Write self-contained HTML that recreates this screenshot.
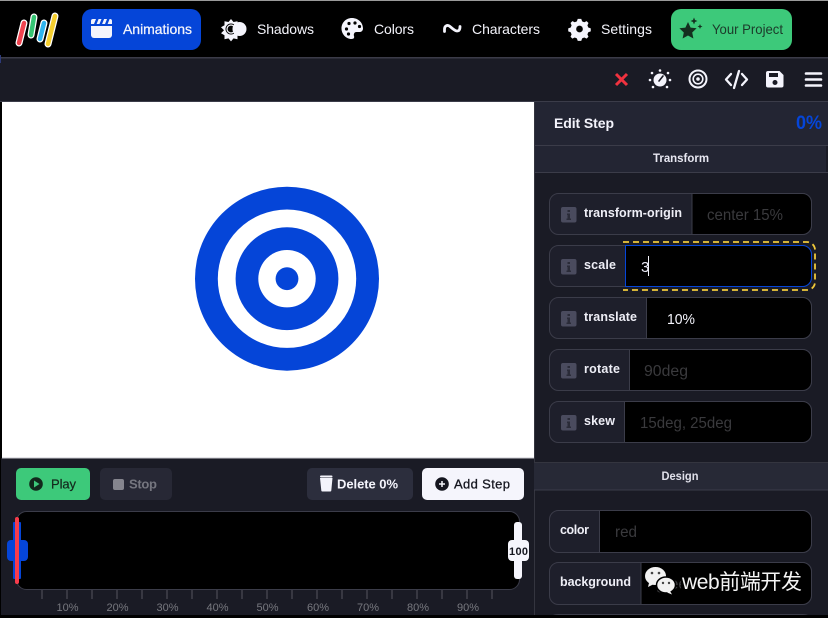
<!DOCTYPE html>
<html><head><meta charset="utf-8"><title>Animations</title>
<style>
html,body{margin:0;padding:0;background:#000;width:828px;height:618px;overflow:hidden}
svg{display:block;filter:blur(0.3px)}
text{font-family:"Liberation Sans","Noto Sans CJK SC",sans-serif}
.nav{font-size:14px;fill:#f4f4fb}
.med{stroke-width:.25px}
.lab{font-size:12.5px;font-weight:bold;fill:#eeeef6}
.ph{font-size:15.500px;fill:#3a3a3d}
.tk{font-size:11px;fill:#77787f;text-anchor:middle}
</style></head><body>
<svg width="828" height="618" viewBox="0 0 828 618" xmlns="http://www.w3.org/2000/svg">
<rect width="828" height="618" fill="#000"/>
<rect width="828" height="1" fill="#9a9a9a"/>
<!-- logo -->
<g stroke-linecap="round" fill="none">
<path d="M24 23L19 43M34 17L31 35M44 23L40 39M55 16L48 44" stroke="#fff" stroke-width="7"/>
<path d="M24 23L19 43" stroke="#f0434f" stroke-width="4.500"/>
<path d="M34 17L31 35" stroke="#35c573" stroke-width="4.500"/>
<path d="M44 23L40 39" stroke="#2fb4ee" stroke-width="4.500"/>
<path d="M55 16L48 44" stroke="#f6cf2f" stroke-width="4.500"/>
</g>
<!-- nav -->
<rect x="82" y="9" width="119" height="41" rx="10" fill="#0545d8"/>
<path d="M91 26h21v9a3 3 0 0 1-3 3H94a3 3 0 0 1-3-3z" fill="#f4f4fc"/>
<path d="M93 19h17a2 2 0 0 1 2 2v3H91v-3a2 2 0 0 1 2-2z" fill="#f4f4fc"/>
<path d="M96 19l-2 5h2.600l2-5zM101.500 19l-2 5h2.600l2-5zM107 19l-2 5h2.600l2-5z" fill="#0545d8"/>
<text class="nav med" x="123" y="34" textLength="69" stroke="#f4f4fb">Animations</text>

<path d="M231 19l2.500 3 4-.8 0 4 3 2-3 3 3 3-3 2 0 4-4-.8-2.500 3-2.500-3-4 .8 0-4-3.500-2 3-3-3-3 3.500-2 0-4 4 .8z" fill="#f4f4fc"/>
<circle cx="231" cy="29" r="5.500" fill="#000"/>
<circle cx="231" cy="29" r="4" fill="none" stroke="#f4f4fc" stroke-width="1.200"/>
<circle cx="239.500" cy="29" r="7" fill="#f4f4fc"/>
<text class="nav" x="257" y="34" textLength="57">Shadows</text>

<path d="M352 18c-6.500 0-10.500 5-10.500 10.500s4.500 10.500 10 10.500c2.500 0 3-1.500 2.500-3s0-4 2.500-4h3.500c1.500 0 3-1.500 3-3.500 0-6-5-10.500-11-10.500z" fill="#f4f4fc"/>
<circle cx="346.500" cy="29" r="1.600" fill="#000"/><circle cx="348.500" cy="34" r="1.600" fill="#000"/><circle cx="349" cy="23.500" r="1.600" fill="#000"/><circle cx="355" cy="23" r="1.600" fill="#000"/><circle cx="359.500" cy="26.500" r="1.600" fill="#000"/>
<text class="nav" x="374" y="34" textLength="40">Colors</text>

<path d="M444.500 31.500v-2c0-4 3-5 5.500-3 2.500 2.200 5 4.500 7 4.500 2 0 3-1 3-4.500" fill="none" stroke="#f4f4fc" stroke-width="2.800" stroke-linecap="round"/>
<text class="nav" x="472" y="34" textLength="68">Characters</text>

<g transform="translate(579.500 29) scale(.88) translate(-579 -29.500)">
<path d="M577 18h4l1 2.800 2.400 1 2.700-1.200 2.100 2.100-1.200 2.700 1 2.400 2.800 1v3.400l-2.800 1-1 2.400 1.200 2.700-2.100 2.100-2.700-1.200-2.400 1-1 2.800h-4l-1-2.800-2.400-1-2.700 1.200-2.100-2.100 1.200-2.700-1-2.400-2.800-1v-3.400l2.800-1 1-2.400-1.200-2.700 2.100-2.100 2.700 1.200 2.400-1z" fill="#f4f4fc"/>
<circle cx="579" cy="29.500" r="3.800" fill="#000"/>
</g>
<text class="nav" x="601" y="34" textLength="51">Settings</text>

<rect x="671" y="9" width="121" height="41" rx="10" fill="#3dc97a"/>
<path d="M688 22l2.600 5.600 6 .7-4.400 4.200 1.200 6-5.400-3-5.400 3 1.200-6-4.400-4.200 6-.7z" fill="#14301f"/>
<path d="M694 17.500l1 2.500 2.500 1-2.500 1-1 2.500-1-2.500-2.500-1 2.500-1zM700 24l.7 1.800 1.800.7-1.800.7-.7 1.800-.7-1.800-1.800-.7 1.800-.7z" fill="#14301f"/>
<text x="712" y="34" font-size="14" textLength="71" fill="#1c3a2a" lengthAdjust="spacingAndGlyphs">Your Project</text>

<!-- toolbar -->
<rect x="0" y="57" width="828" height="1.500" fill="#3b3b48"/>
<rect x="0" y="58.500" width="828" height="42.500" fill="#1a1b25"/>
<rect x="0" y="101" width="828" height="1" fill="#3b3c49"/>
<path d="M616 74l11 11M627 74l-11 11" stroke="#f0323f" stroke-width="3" fill="none"/>
<circle cx="660" cy="80" r="6.500" fill="#f4f4fc"/>
<path d="M659 81l4-5" stroke="#1a1b25" stroke-width="1.600" stroke-linecap="round"/>
<g fill="#f4f4fc"><circle cx="660" cy="70.500" r="1.300"/><circle cx="652" cy="73" r="1.300"/><circle cx="668" cy="73" r="1.300"/><circle cx="650" cy="80" r="1.300"/><circle cx="670" cy="80" r="1.300"/><circle cx="653" cy="87" r="1.300"/><circle cx="667" cy="87" r="1.300"/></g>
<circle cx="698" cy="79" r="8.500" fill="none" stroke="#f4f4fc" stroke-width="2"/>
<circle cx="698" cy="79" r="4.800" fill="none" stroke="#f4f4fc" stroke-width="1.600"/>
<circle cx="698" cy="79" r="1.800" fill="#f4f4fc"/>
<path d="M731 74l-5 5.500 5 5.500M742 74l5 5.500-5 5.500M739 71l-5 17" fill="none" stroke="#f4f4fc" stroke-width="2.300" stroke-linecap="round" stroke-linejoin="round"/>
<path d="M768 71h11.500l4 4v10.500a2 2 0 0 1-2 2H768a2 2 0 0 1-2-2V73a2 2 0 0 1 2-2z" fill="#f4f4fc"/>
<rect x="769" y="73" width="9" height="4" fill="#1a1b25"/>
<circle cx="775" cy="82.500" r="2.500" fill="#1a1b25"/>
<path d="M806 73.500h15M806 79.500h15M806 85.500h15" stroke="#f4f4fc" stroke-width="2.600" stroke-linecap="round"/>

<!-- canvas -->
<rect x="2" y="102" width="532" height="356" fill="#fff"/>
<circle cx="287" cy="278.700" r="92" fill="#0545d8"/>
<circle cx="287" cy="278.700" r="69.200" fill="#fff"/>
<circle cx="287" cy="278.700" r="51.400" fill="#0545d8"/>
<circle cx="287" cy="278.700" r="28.700" fill="#fff"/>
<circle cx="287" cy="278.700" r="11.400" fill="#0545d8"/>

<!-- bottom -->
<rect x="1" y="458" width="533" height="157" fill="#1a1b25"/>
<rect x="2" y="457.500" width="532" height="1" fill="#c9c9d0"/>
<rect x="16" y="468" width="74" height="32" rx="5" fill="#3dc97a"/>
<circle cx="36" cy="484" r="6.800" fill="#12291c"/>
<path d="M34 480.500v7l5.500-3.500z" fill="#3dc97a"/>
<text x="51" y="488.500" font-size="13" textLength="25" fill="#14291d" stroke="#14291d" stroke-width=".2">Play</text>
<rect x="100" y="468" width="72" height="32" rx="5" fill="#272835"/>
<rect x="113" y="479" width="11" height="11" rx="2" fill="#85858e"/>
<text x="129" y="488.500" font-size="13" font-weight="bold" textLength="28" fill="#75767f">Stop</text>
<rect x="307" y="468" width="106" height="32" rx="5" fill="#2c2e3d"/>
<path d="M320 478h12.500l-1.200 12.500a1 1 0 0 1-1 1h-8a1 1 0 0 1-1-1z" fill="#f4f4fc"/>
<rect x="320" y="475.500" width="12.500" height="2" rx="1" fill="#f4f4fc"/>
<text x="337" y="488.500" font-size="13" font-weight="bold" textLength="61" fill="#f4f4fc">Delete 0%</text>
<rect x="422" y="468" width="102" height="32" rx="5" fill="#f5f5fc"/>
<circle cx="442" cy="484" r="6.800" fill="#15161f"/>
<path d="M439 484h6M442 481v6" stroke="#f5f5fc" stroke-width="1.500"/>
<text x="454" y="488.500" font-size="13" textLength="56" fill="#15161f" stroke="#15161f" stroke-width=".3">Add Step</text>

<rect x="16.500" y="511.500" width="503" height="78" rx="10" fill="#000" stroke="#3b3c49"/>
<rect x="13" y="522" width="8" height="57" rx="1" fill="#0545d8"/>
<rect x="7" y="540" width="21" height="21" rx="4" fill="#0545d8"/>
<rect x="15" y="517" width="4" height="67" rx="2" fill="#f73c4c"/>
<rect x="514" y="522" width="8" height="57" rx="3" fill="#f5f5fc"/>
<rect x="508" y="540" width="21" height="21" rx="4" fill="#f5f5fc"/>
<text x="518.500" y="555" font-size="11" font-weight="bold" text-anchor="middle" textLength="19" fill="#15161f">100</text>
<path d="M42 590v9M67 590v9M92 590v9M117 590v9M142 590v9M167 590v9M192 590v9M217 590v9M242 590v9M267 590v9M292 590v9M317 590v9M342 590v9M367 590v9M392 590v9M417 590v9M442 590v9M467 590v9M492 590v9" stroke="#55565f" stroke-width="1"/>
<text class="tk" x="67.500" y="611">10%</text><text class="tk" x="117.500" y="611">20%</text><text class="tk" x="167.500" y="611">30%</text><text class="tk" x="217.500" y="611">40%</text><text class="tk" x="267.500" y="611">50%</text><text class="tk" x="318" y="611">60%</text><text class="tk" x="368" y="611">70%</text><text class="tk" x="418" y="611">80%</text><text class="tk" x="468" y="611">90%</text>

<!-- side panel -->
<rect x="534" y="102" width="294" height="513" fill="#1a1b25"/>
<rect x="534" y="102" width="294" height="43" fill="#232533"/>
<rect x="534" y="145" width="294" height="1" fill="#3b3c49"/>
<rect x="534" y="146" width="292" height="26" fill="#232533"/>
<rect x="534" y="172" width="294" height="1" fill="#3b3c49"/>
<rect x="534" y="102" width="1" height="513" fill="#34353f"/>
<text x="554" y="128" font-size="14" font-weight="bold" textLength="60" fill="#f4f4fc">Edit Step</text>
<text x="796" y="129" font-size="19" font-weight="bold" textLength="26" fill="#0545d8" lengthAdjust="spacingAndGlyphs">0%</text>
<text x="653" y="162" font-size="12" font-weight="bold" textLength="56" fill="#e8e8f2" lengthAdjust="spacingAndGlyphs">Transform</text>

<!-- fields -->
<g fill="#1e1f2b" stroke="#3b3c49">
<rect x="549.500" y="193.500" width="262" height="41" rx="9"/>
<rect x="549.500" y="245.500" width="262" height="41" rx="9"/>
<rect x="549.500" y="297.500" width="262" height="41" rx="9"/>
<rect x="549.500" y="349.500" width="262" height="41" rx="9"/>
<rect x="549.500" y="401.500" width="262" height="41" rx="9"/>
<rect x="549.500" y="510.500" width="262" height="42" rx="9"/>
<rect x="549.500" y="562.500" width="262" height="42" rx="9"/>
<rect x="549.500" y="614.500" width="262" height="10" rx="9"/>
</g>
<g fill="#000" stroke="#3b3c49">
<path d="M692 193.500h110.500a9 9 0 0 1 9 9v23a9 9 0 0 1-9 9H692z"/>
<path d="M646.500 297.500h156a9 9 0 0 1 9 9v23a9 9 0 0 1-9 9h-156z"/>
<path d="M629.500 349.500h173a9 9 0 0 1 9 9v23a9 9 0 0 1-9 9h-173z"/>
<path d="M624.500 401.500h178a9 9 0 0 1 9 9v23a9 9 0 0 1-9 9h-178z"/>
<path d="M599.500 510.500h203a9 9 0 0 1 9 9v24a9 9 0 0 1-9 9h-203z"/>
<path d="M641 562.500h161.500a9 9 0 0 1 9 9v24a9 9 0 0 1-9 9H641z"/>
</g>
<path d="M625.500 245.500h177a9 9 0 0 1 9 9v23a9 9 0 0 1-9 9h-177z" fill="#000" stroke="#0545d8"/>
<path d="M623 242h184a8 8 0 0 1 8 8v32a8 8 0 0 1-8 8H623" fill="none" stroke="#f0c93a" stroke-width="1.800" stroke-dasharray="6 4"/>

<g fill="#4a4b5e">
<rect x="561" y="207" width="15.500" height="15.500" rx="2"/><rect x="561" y="259" width="15.500" height="15.500" rx="2"/><rect x="561" y="311" width="15.500" height="15.500" rx="2"/><rect x="561" y="363" width="15.500" height="15.500" rx="2"/><rect x="561" y="415" width="15.500" height="15.500" rx="2"/>
</g>
<g fill="#2a2b38">
<path d="M567.500 210h2.500v2h-2.500zM567 213.500h3v5h1v1.500h-4.500v-1.500h1v-3.500h-.5z"/>
<path d="M567.500 262h2.500v2h-2.500zM567 265.500h3v5h1v1.500h-4.500v-1.500h1v-3.500h-.5z"/>
<path d="M567.500 314h2.500v2h-2.500zM567 317.500h3v5h1v1.500h-4.500v-1.500h1v-3.500h-.5z"/>
<path d="M567.500 366h2.500v2h-2.500zM567 369.500h3v5h1v1.500h-4.500v-1.500h1v-3.500h-.5z"/>
<path d="M567.500 418h2.500v2h-2.500zM567 421.500h3v5h1v1.500h-4.500v-1.500h1v-3.500h-.5z"/>
</g>
<text class="lab" x="584" y="217" textLength="98">transform-origin</text>
<text class="lab" x="584" y="269" textLength="32">scale</text>
<text class="lab" x="584" y="321" textLength="53">translate</text>
<text class="lab" x="584" y="373" textLength="36">rotate</text>
<text class="lab" x="584" y="425" textLength="31">skew</text>
<text class="lab" x="560" y="534" textLength="29">color</text>
<text class="lab" x="560" y="586" textLength="71">background</text>

<text class="ph" x="707" y="220" textLength="76" lengthAdjust="spacingAndGlyphs">center 15%</text>
<text x="641" y="272" font-size="15" fill="#e8e8f5">3</text>
<rect x="648" y="256" width="1" height="20" fill="#f4f4fc"/>
<text x="667" y="324" font-size="15" textLength="28" fill="#f4f4fc" lengthAdjust="spacingAndGlyphs">10%</text>
<text class="ph" x="644" y="376" textLength="44" lengthAdjust="spacingAndGlyphs">90deg</text>
<text class="ph" x="640" y="428" textLength="92" lengthAdjust="spacingAndGlyphs">15deg, 25deg</text>
<text class="ph" x="615" y="537" textLength="22" lengthAdjust="spacingAndGlyphs">red</text>
<text class="ph" x="656" y="589">green</text>

<rect x="534" y="462" width="294" height="28" fill="#272936"/>
<rect x="534" y="462" width="294" height="1" fill="#34353f"/>
<rect x="534" y="489.500" width="294" height="1" fill="#3b3c49"/>
<text x="661.500" y="480" font-size="12" font-weight="bold" textLength="37" fill="#e0e0ea" lengthAdjust="spacingAndGlyphs">Design</text>

<!-- watermark -->
<rect x="681" y="566" width="125" height="30" fill="#000"/>
<ellipse cx="655.500" cy="576" rx="10.500" ry="9" fill="#f2f2f2"/>
<path d="M649 583l-1 4 5-2.500z" fill="#f2f2f2"/>
<circle cx="652" cy="573" r="1.300" fill="#444"/><circle cx="659" cy="573" r="1.300" fill="#444"/>
<ellipse cx="666" cy="585" rx="9.500" ry="8" stroke="#000" stroke-width="1.500" fill="#f2f2f2"/>
<path d="M670 591l2 3.500-5-2z" fill="#f2f2f2"/>
<circle cx="663" cy="583" r="1.200" fill="#444"/><circle cx="669" cy="583" r="1.200" fill="#444"/>
<text x="682" y="589" font-size="21" textLength="120" fill="#f4f4f4">web前端开发</text>
<rect x="0" y="615" width="828" height="3" fill="#000"/>
<rect x="0" y="55" width="1" height="8" fill="#2d3a7a"/>
</svg>
</body></html>
